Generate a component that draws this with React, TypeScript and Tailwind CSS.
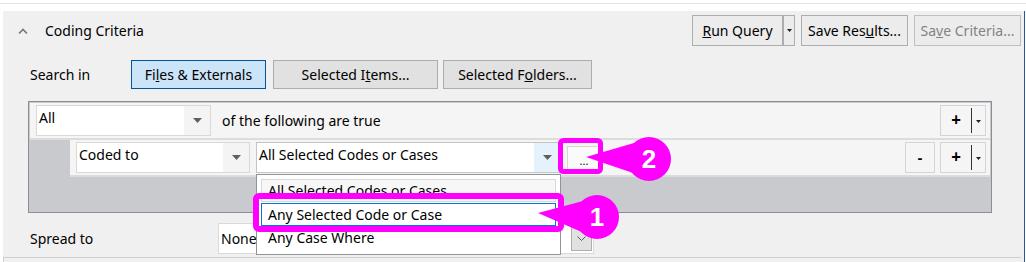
import React from "react";

const Caret = ({ color = "#606060" }: { color?: string }) => (
  <svg width="9" height="5" viewBox="0 0 9 5">
    <path d="M0 0h9L4.5 5z" fill={color} />
  </svg>
);

const TinyCaret = () => (
  <svg width="5" height="3" viewBox="0 0 5 3">
    <path d="M0 0h5L2.5 3z" fill="#222" />
  </svg>
);

const Select = ({ text, w, arrowBg = "bg-[#f4f4f4]", border = "border-[#d9d9d9]" }: { text: string; w: string; arrowBg?: string; border?: string }) => (
  <div className={`flex h-[31px] ${w} border ${border} bg-white`}>
    <div className="flex-1 pl-[2px] pt-[3px] leading-[18px]">{text}</div>
    <div className={`flex w-[26px] items-center justify-center ${arrowBg}`}>
      <Caret />
    </div>
  </div>
);

const PlusSplit = () => (
  <div className="flex h-[31px] w-[46px] border border-[#d4d4d4] bg-[#f5f5f5]">
    <div className="flex w-[30px] items-center justify-center pb-[3px] text-[17px] font-bold leading-none">+</div>
    <div className="my-[2px] w-px bg-[#333]" />
    <div className="flex flex-1 items-center justify-center pt-[2px]">
      <TinyCaret />
    </div>
  </div>
);

export default function App() {
  return (
    <div className="relative h-[262px] w-[1026px] overflow-hidden bg-white font-['Noto_Sans',sans-serif] text-[14px] text-black">
      {/* top strip */}
      <div className="h-[11px] pt-[3px]">
        <div className="h-px bg-[#e3e3e3]" />
      </div>

      <div className="ml-[3px] mr-[1px] flex h-[251px] flex-col border-r border-[#2b579a] bg-[#f0f0f0]">
        {/* header */}
        <div className="flex items-center pr-[3px] pt-[4px]">
          <svg width="10" height="6" viewBox="0 0 10 6" className="ml-[15px]">
            <path d="M1 5.5L5 1.5L9 5.5" stroke="#777" strokeWidth="1.6" fill="none" />
          </svg>
          <span className="ml-[17px]">Coding Criteria</span>
          <div className="flex-1" />
          <div className="flex h-[31px] border border-[#adadad] bg-[#ececec]">
            <div className="flex w-[89px] items-center justify-center">
              <span><u>R</u>un Query</span>
            </div>
            <div className="flex w-[12px] items-center justify-center border-l-2 border-[#adadad]">
              <TinyCaret />
            </div>
          </div>
          <div className="ml-[6px] flex h-[31px] w-[107px] items-center justify-center border border-[#adadad] bg-[#ececec]">
            <span>Save Res<u>u</u>lts...</span>
          </div>
          <div className="ml-[6px] flex h-[31px] w-[107px] items-center justify-center border border-[#bfbfbf] bg-[#ececec] text-[#838383]">
            <span>Sa<u>v</u>e Criteria...</span>
          </div>
        </div>

        {/* search in */}
        <div className="mt-[14px] flex items-center">
          <span className="ml-[27px] w-[101px]">Search in</span>
          <div className="flex h-[29px] w-[135px] items-center justify-center border border-[#005499] bg-[#cce4f7]">
            <span>Fi<u>l</u>es &amp; Externals</span>
          </div>
          <div className="ml-[7px] flex h-[29px] w-[165px] items-center justify-center border border-[#adadad] bg-[#e1e1e1]">
            <span>Selected I<u>t</u>ems...</span>
          </div>
          <div className="ml-[5px] flex h-[29px] w-[149px] items-center justify-center border border-[#adadad] bg-[#e1e1e1]">
            <span>Selected F<u>o</u>lders...</span>
          </div>
        </div>

        {/* criteria panel */}
        <div className="ml-[25px] mt-[12px] flex h-[112px] w-[964px] flex-col border border-[#8b8f95] bg-[#c9cacd] p-px">
          <div className="flex h-[37px] items-center border-b-2 border-[#dcdcdc] bg-[#f5f5f5] pl-[6px] pr-[4px]">
            <Select text="All" w="w-[175px]" />
            <span className="ml-[11px]">of the following are true</span>
            <div className="flex-1" />
            <PlusSplit />
          </div>
          <div className="ml-[40px] flex h-[37px] items-center border-b-2 border-[#dcdcdc] bg-[#f5f5f5] pl-[6px] pr-[4px]">
            <Select text="Coded to" w="w-[174px]" />
            <div className="ml-[6px]">
              <Select text="All Selected Codes or Cases" w="w-[305px]" arrowBg="bg-[#e5f1fb]" border="border-[#c4c4c4]" />
            </div>
            <div className="ml-[6px] flex h-[24px] w-[34px] items-end justify-center border border-[#d4d4d4] bg-[#fafafa] pb-[3px] text-[11px] leading-none">
              ...
            </div>
            <div className="flex-1" />
            <div className="flex h-[31px] w-[30px] items-center justify-center border border-[#d4d4d4] bg-[#f5f5f5] font-bold">
              -
            </div>
            <div className="ml-[5px]">
              <PlusSplit />
            </div>
          </div>
        </div>

        {/* spread to */}
        <div className="mt-[10px] flex items-center">
          <span className="ml-[27px] w-[188px]">Spread to</span>
          <div className="flex h-[31px] w-[376px] items-center border border-[#d9d9d9] bg-white">
            <span className="flex-1 pl-[2px]">None</span>
            <div className="mr-px flex h-[24px] w-[21px] items-center justify-center border border-[#adadad] bg-[#e1e1e1]">
              <svg width="9" height="5" viewBox="0 0 9 5">
                <path d="M0.5 0.5L4.5 4.5L8.5 0.5" stroke="#555" fill="none" />
              </svg>
            </div>
          </div>
        </div>

        <div className="mt-[3px] mr-[3px] flex-1 border-t border-l border-[#cfcfcf] bg-[#f0f0f0]" />
      </div>

      {/* open dropdown list */}
      <div className="absolute left-[256px] top-[174px] flex h-[81px] w-[305px] flex-col border border-[#8f9499] bg-white px-[4px] pt-[4px]">
        <div className="h-[23px] border border-[#d9d9d9] bg-[#f7f7f7] pl-[6px] leading-[22px]">All Selected Codes or Cases</div>
        <div className="mt-px h-[23px] border border-[#0078d7] bg-white pl-[6px] leading-[22px]">Any Selected Code or Case</div>
        <div className="mt-px h-[23px] pl-[7px] leading-[22px]">Any Case Where</div>
      </div>

      {/* annotation callouts */}
      <svg className="pointer-events-none absolute left-0 top-0" width="1026" height="262" viewBox="0 0 1026 262">
        <rect x="256" y="196" width="305" height="33" rx="3" fill="none" stroke="#ff00ff" strokeWidth="6" />
        <rect x="560.5" y="140.5" width="40" height="31" rx="3" fill="none" stroke="#ff00ff" strokeWidth="5" />
        <path d="M586 157L634 143L636 174Z" fill="#ff00ff" />
        <circle cx="649" cy="159" r="22" fill="#ff00ff" />
        <text x="649" y="168" textAnchor="middle" fill="#fff" fontSize="26" fontWeight="bold" fontFamily="Liberation Sans, Arial, sans-serif">2</text>
        <path d="M538 213L583 201L584 233Z" fill="#ff00ff" />
        <circle cx="597" cy="217" r="22" fill="#ff00ff" />
        <text x="597" y="226" textAnchor="middle" fill="#fff" fontSize="26" fontWeight="bold" fontFamily="Liberation Sans, Arial, sans-serif">1</text>
      </svg>
    </div>
  );
}
